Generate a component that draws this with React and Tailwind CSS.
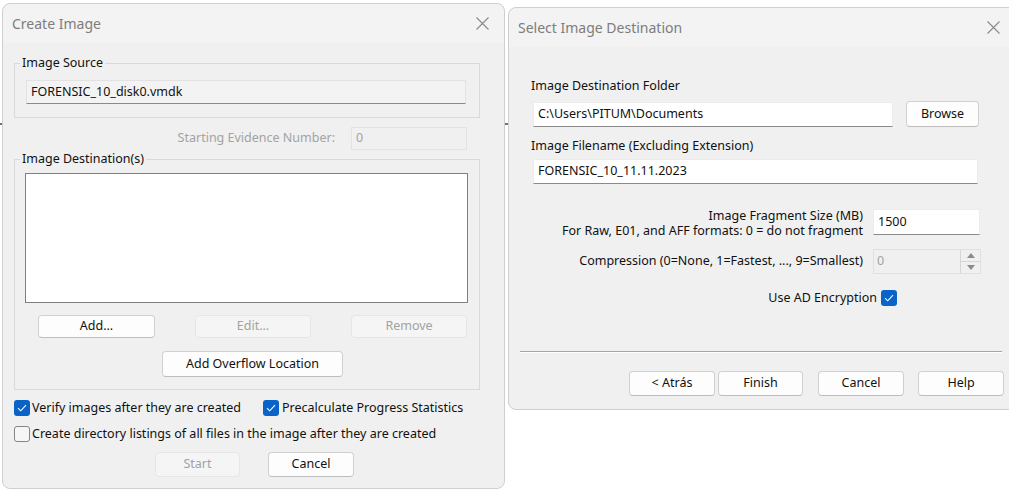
import React from "react";

const font = "font-['Noto_Sans',sans-serif]";

function CloseX() {
  return (
    <svg width="13" height="13" viewBox="0 0 13 13" className="text-[#8a8a8a]">
      <path d="M0.5 0.5L12.5 12.5M12.5 0.5L0.5 12.5" stroke="currentColor" strokeWidth="1.1" fill="none" />
    </svg>
  );
}

function Check({ checked }) {
  if (checked) {
    return (
      <span className="w-4 h-4 rounded-[3px] bg-[#0a63c6] flex items-center justify-center shrink-0">
        <svg width="10" height="8" viewBox="0 0 10 8">
          <path d="M1 4.2L3.7 6.8L9 1.2" stroke="#fff" strokeWidth="1.1" fill="none" />
        </svg>
      </span>
    );
  }
  return <span className="w-4 h-4 rounded-[3px] border border-[#858585] bg-[#f6f6f6] shrink-0" />;
}

function Btn({ children, w, h = "h-[23px]", disabled }) {
  return (
    <div
      className={`${w} ${h} rounded-[4px] border flex items-center justify-center text-[12.5px] ${
        disabled
          ? "border-[#e6e6e6] bg-[#f5f5f5] text-[#a2a2a2]"
          : "border-[#d0d0d0] border-b-[#bdbdbd] bg-[#fdfdfd] text-[#111]"
      }`}
    >
      {children}
    </div>
  );
}

function TitleBar({ title }) {
  return (
    <div className="h-[39px] bg-[#f3f3f3] flex items-center justify-between pl-[9px] pr-[15px] rounded-t-[8px]">
      <span className="text-[14px] text-[#7d7d7d]">{title}</span>
      <CloseX />
    </div>
  );
}

function CreateImage() {
  return (
    <div className="absolute left-[2px] top-[3px] w-[503px] h-[486px] rounded-[8px] border border-[#cfcfcf] bg-[#f0f0f0] overflow-hidden text-[#111]">
      <TitleBar title="Create Image" />
      <div className="flex flex-col pl-[11px]">
        <fieldset className="mt-[12px] w-[466px] border border-[#d9d9d9] pb-[13px]">
          <legend className="ml-[5px] px-[2px] text-[12.5px] leading-[16px]">Image Source</legend>
          <div className="mt-[9px] ml-[11px] w-[440px] h-[24px] bg-[#f3f3f3] border border-[#e2e2e2] border-b-[#8a8a8a] flex items-center pl-[4px] text-[12.5px]">
            FORENSIC_10_disk0.vmdk
          </div>
        </fieldset>
        <div className="mt-[9px] w-[466px] flex items-center justify-end pr-[13px] gap-[16px]">
          <span className="text-[12.5px] text-[#a3a3a3]">Starting Evidence Number:</span>
          <div className="w-[116px] h-[23px] bg-[#f0f0f0] border border-[#e3e3e3] flex items-center pl-[4px] text-[12.5px] text-[#a3a3a3]">
            0
          </div>
        </div>
        <fieldset className="mt-[1px] w-[466px] border border-[#d9d9d9] pb-[12px]">
          <legend className="ml-[5px] px-[2px] text-[12.5px] leading-[16px]">Image Destination(s)</legend>
          <div className="mt-[6px] ml-[10px] w-[443px] h-[130px] bg-white border border-[#7f7f7f]" />
          <div className="mt-[12px] ml-[23px] flex gap-[40px]">
            <Btn w="w-[117px]">Add...</Btn>
            <Btn w="w-[116px]" disabled>Edit...</Btn>
            <Btn w="w-[116px]" disabled>Remove</Btn>
          </div>
          <div className="mt-[13px] ml-[147px]">
            <Btn w="w-[181px]" h="h-[26px]">Add Overflow Location</Btn>
          </div>
        </fieldset>
        <div className="mt-[10px] flex items-center h-[16px] text-[12.5px]">
          <Check checked />
          <span className="ml-[2px] w-[231px]">Verify images after they are created</span>
          <Check checked />
          <span className="ml-[3px]">Precalculate Progress Statistics</span>
        </div>
        <div className="mt-[10px] flex items-center h-[16px] text-[12.5px]">
          <Check />
          <span className="ml-[2px]">Create directory listings of all files in the image after they are created</span>
        </div>
        <div className="mt-[10px] ml-[141px] flex gap-[28px]">
          <Btn w="w-[85px]" h="h-[25px]" disabled>Start</Btn>
          <Btn w="w-[86px]" h="h-[25px]">Cancel</Btn>
        </div>
      </div>
    </div>
  );
}

function SelectDest() {
  return (
    <div className="absolute left-[508px] top-[7px] w-[508px] h-[403px] rounded-[8px] border border-[#cfcfcf] bg-[#f0f0f0] overflow-hidden text-[#111]">
      <TitleBar title="Select Image Destination" />
      <div className="flex flex-col pl-[22px]">
        <div className="mt-[31px] text-[12.5px] leading-[16px]">Image Destination Folder</div>
        <div className="mt-[7px] flex items-center">
          <div className="ml-[2px] w-[360px] h-[25px] bg-white border border-[#ececec] border-b-[#8a8a8a] flex items-center pl-[4px] text-[12.5px]">
            C:\Users\PITUM\Documents
          </div>
          <div className="ml-[13px]">
            <Btn w="w-[73px]" h="h-[26px]">Browse</Btn>
          </div>
        </div>
        <div className="mt-[11px] text-[12.5px] leading-[16px]">Image Filename (Excluding Extension)</div>
        <div className="mt-[5px] ml-[2px] w-[445px] h-[25px] bg-white border border-[#ececec] border-b-[#8a8a8a] flex items-center pl-[4px] text-[12.5px]">
          FORENSIC_10_11.11.2023
        </div>
        <div className="mt-[24px] w-[449px] flex items-start justify-end gap-[10px]">
          <div className="text-right text-[12.5px] leading-[15px]">
            <div>Image Fragment Size (MB)</div>
            <div>For Raw, E01, and AFF formats: 0 = do not fragment</div>
          </div>
          <div className="mt-[1px] w-[107px] h-[26px] bg-white border border-[#ececec] border-b-[#8a8a8a] flex items-center pl-[4px] text-[12.5px]">
            1500
          </div>
        </div>
        <div className="mt-[11px] w-[450px] flex items-center justify-end gap-[10px]">
          <span className="text-[12.5px]">Compression (0=None, 1=Fastest, ..., 9=Smallest)</span>
          <div className="w-[108px] h-[25px] bg-[#f0f0f0] border border-[#e0e0e0] flex items-center text-[12.5px] text-[#a3a3a3]">
            <span className="pl-[3px] flex-1">0</span>
            <div className="w-[20px] h-full flex flex-col border-l border-[#d6d6d6]">
              <div className="flex-1 flex items-center justify-center border-b border-[#d6d6d6] bg-[#f0f0f0]">
                <svg width="8" height="5" viewBox="0 0 8 5"><path d="M0 5L4 0L8 5Z" fill="#8c8c8c" /></svg>
              </div>
              <div className="flex-1 flex items-center justify-center bg-[#f0f0f0]">
                <svg width="8" height="5" viewBox="0 0 8 5"><path d="M0 0L4 5L8 0Z" fill="#8c8c8c" /></svg>
              </div>
            </div>
          </div>
        </div>
        <div className="mt-[16px] w-[366px] flex items-center justify-end gap-[4px] h-[16px]">
          <span className="text-[12.5px]">Use AD Encryption</span>
          <Check checked />
        </div>
        <div className="mt-[45px] -ml-[11px] w-[482px] h-[2px] border-t border-[#a5a5a5] border-b border-b-white" />
        <div className="mt-[18px] ml-[98px] flex">
          <Btn w="w-[86px]" h="h-[25px]">&lt; Atrás</Btn>
          <div className="ml-[3px]"><Btn w="w-[85px]" h="h-[25px]">Finish</Btn></div>
          <div className="ml-[15px]"><Btn w="w-[86px]" h="h-[25px]">Cancel</Btn></div>
          <div className="ml-[14px]"><Btn w="w-[86px]" h="h-[25px]">Help</Btn></div>
        </div>
      </div>
    </div>
  );
}

export default function App() {
  return (
    <div className={`relative w-[1009px] h-[489px] bg-white overflow-hidden ${font}`}>
      <div className="pt-[123px]">
        <div className="h-[2px] bg-[#707070]" />
      </div>
      <CreateImage />
      <SelectDest />
    </div>
  );
}
